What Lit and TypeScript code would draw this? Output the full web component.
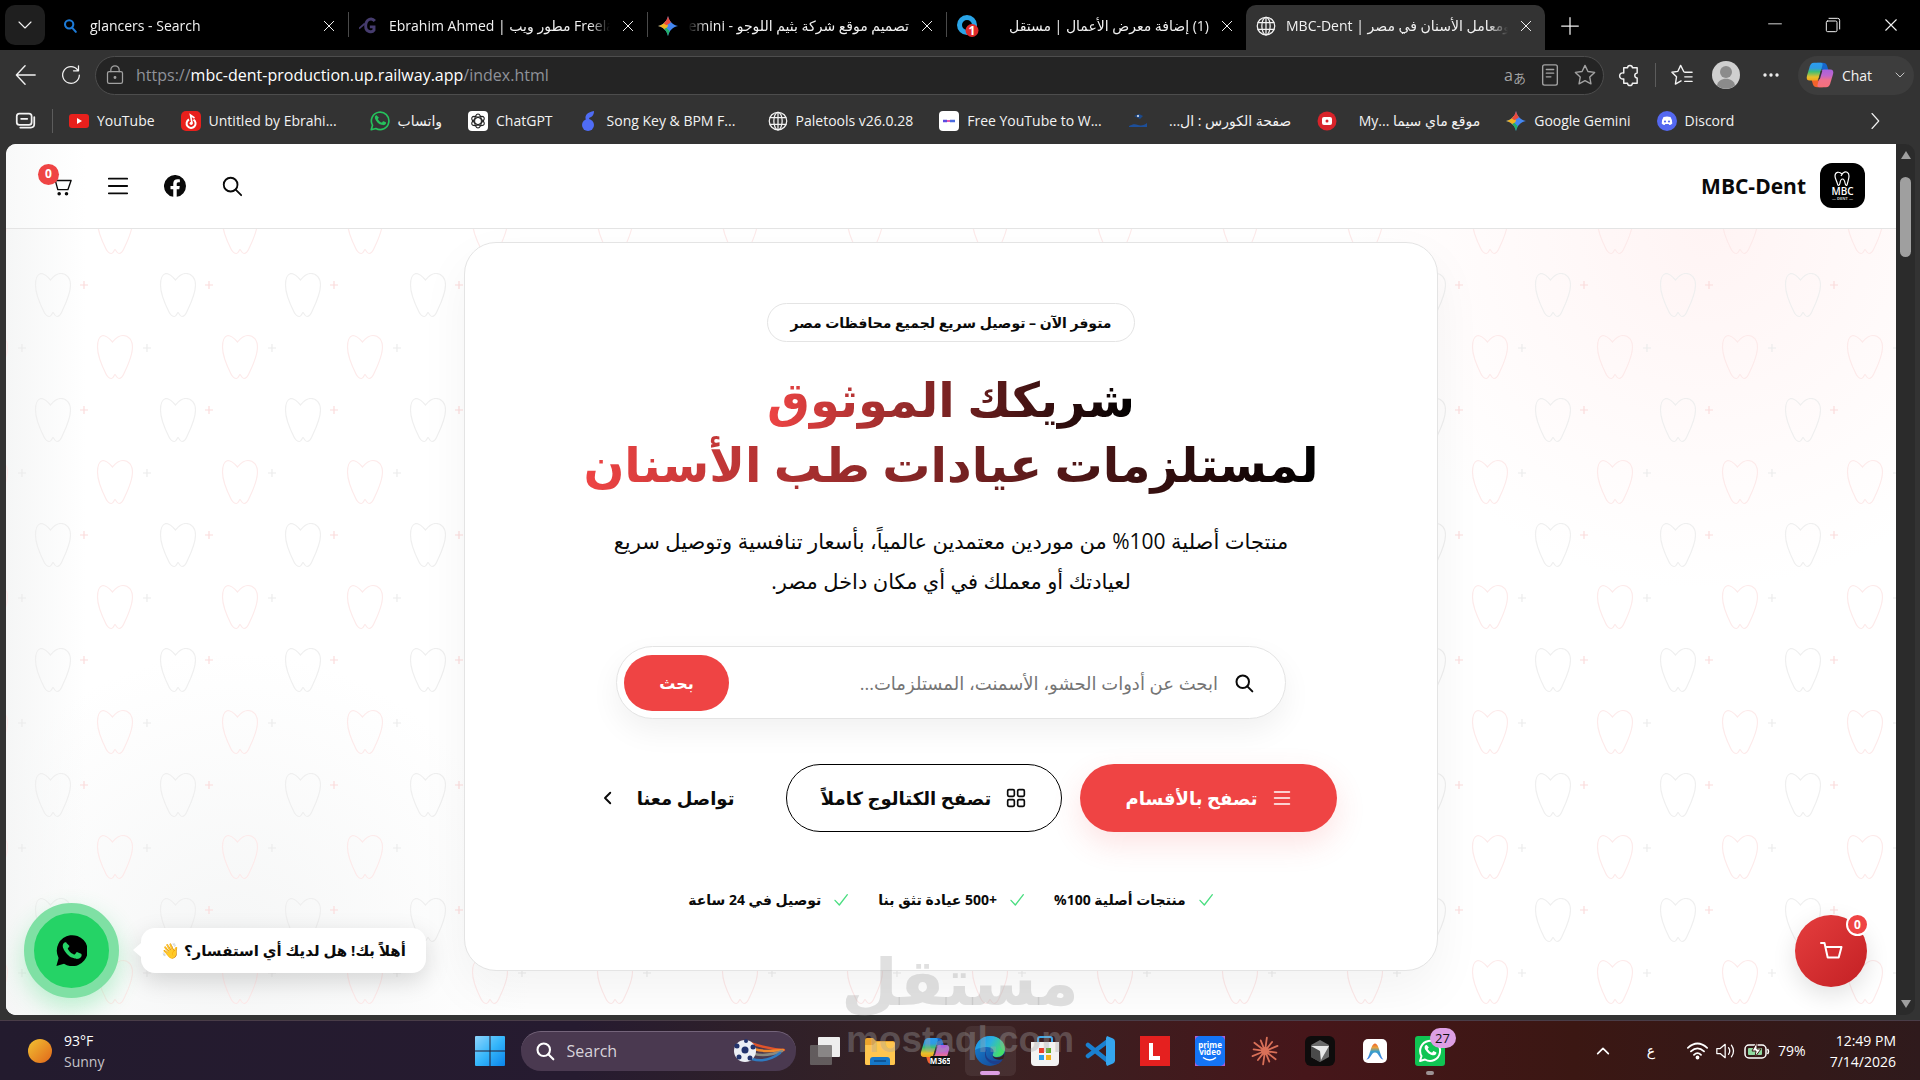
import { LitElement, html, svg, css, nothing } from "lit";
import { customElement } from "lit/decorators.js";
import { classMap } from "lit/directives/class-map.js";

const icon = (size: number, body: unknown, box = 24) =>
  html`<svg width=${size} height=${size} viewBox="0 0 ${box} ${box}" fill="none" stroke="currentColor"
    stroke-width="1.5" stroke-linecap="round" stroke-linejoin="round" aria-hidden="true">${body}</svg>`;

const shapes = {
  close: svg`<path d="M5 5l14 14M19 5L5 19"/>`,
  down: svg`<path d="M4 8l8 8 8-8"/>`,
  up: svg`<path d="M4 16l8-8 8 8"/>`,
  left: svg`<path d="M15 5l-7 7 7 7"/>`,
  plus: svg`<path d="M12 2v20M2 12h20"/>`,
  globe: svg`<circle cx="12" cy="12" r="10.5"/><ellipse cx="12" cy="12" rx="5" ry="10.5"/><path d="M2.5 8h19M2.5 16h19M12 1.5v21"/>`,
  search: svg`<circle cx="10.5" cy="10.5" r="7.5"/><path d="M16 16l6 6"/>`,
  menu: svg`<path d="M2 4h20M2 12h20M2 20h20"/>`,
  cart: svg`<path d="M1 3h4l3.500 13h11L23 6H6"/><circle cx="10" cy="20.5" r="1.2" fill="currentColor"/><circle cx="18" cy="20.5" r="1.2" fill="currentColor"/>`,
  basket: svg`<path d="M2 4h3.500l3.200 14.500h11L22.500 8H6.500"/>`,
  grid: svg`<rect x="2" y="2" width="8" height="8" rx="1.5"/><rect x="14" y="2" width="8" height="8" rx="1.5"/><rect x="2" y="14" width="8" height="8" rx="1.5"/><rect x="14" y="14" width="8" height="8" rx="1.5"/>`,
  check: svg`<path d="M3 12.500l6.500 7L21.500 4"/>`,
  facebook: svg`<path stroke="none" fill="currentColor" d="M24 12a12 12 0 1 0-13.900 11.850V15.470H7.080V12h3.020V9.360c0-3 1.800-4.670 4.550-4.670 1.300 0 2.680.23 2.680.23v2.950h-1.510c-1.490 0-1.950.930-1.950 1.880V12h3.320l-.530 3.470h-2.790v8.380A12 12 0 0 0 24 12z"/>`,
  gemini: svg`<defs><clipPath id="spark"><path d="M12 0c1.500 6.500 5.500 10.500 12 12-6.500 1.500-10.500 5.500-12 12-1.500-6.500-5.500-10.500-12-12C6.500 10.500 10.500 6.500 12 0z"/></clipPath></defs>
    <g clip-path="url(#spark)" stroke="none"><rect width="24" height="24" fill="#4487f2"/><path d="M0 4h9l3 8-3 4-9 3z" fill="#f3b41d"/><path d="M6 0h12l-3 8-5 3-4-3z" fill="#ea4a3c"/><path d="M7 24h9l-2-6-4-4-3 2z" fill="#22b067"/></g>`,
  phone: svg`<path stroke="none" fill="currentColor" d="M8.300 6.400c-.300-.700-.600-.700-.900-.700-1 0-2.200 1-2.200 2.900 0 1.700 1.300 3.400 1.500 3.700.2.200 2.500 4 6.200 5.400 3.100 1.200 3.700.8 4.300.7.700-.1 2.100-.9 2.400-1.700.3-.9.300-1.600.2-1.700-.2-.3-.5-.4-.9-.6l-2.300-1.100c-.3-.1-.6-.2-.8.2l-1.100 1.400c-.2.200-.4.300-.8.100-.3-.2-1.500-.5-2.800-1.700-1-.9-1.700-2.100-1.900-2.400-.2-.4 0-.6.200-.8l.9-1.200c.1-.3 0-.500 0-.600z"/>`,
};

const whatsappOutline = (color: string, size = 20) =>
  html`<svg width=${size} height=${size} viewBox="0 0 24 24" aria-hidden="true">
    <path d="M1.500 22.500L3 17A10.500 10.500 0 1 1 7 21z" fill="none" stroke=${color} stroke-width="2" stroke-linejoin="round"/>
    <g color=${color} transform="translate(1 0) scale(.92)">${shapes.phone}</g></svg>`;

const copilotArt = svg`
  <defs>
    <linearGradient id="cp1" x1="0" y1="0" x2="0" y2="1"><stop stop-color="#2b9df0"/><stop offset=".3" stop-color="#2f9be0"/><stop offset=".5" stop-color="#3fbf74"/><stop offset=".8" stop-color="#e8bf2c"/><stop offset="1" stop-color="#f2a51c"/></linearGradient>
    <linearGradient id="cp2" x1="0" y1="0" x2="0" y2="1"><stop stop-color="#a862dc"/><stop offset=".35" stop-color="#c066cc"/><stop offset=".6" stop-color="#f0708a"/><stop offset="1" stop-color="#f6707a"/></linearGradient>
  </defs>
  <path fill="#1666cc" d="M12 2h6c2.500 0 4 1 4.600 3.200L24 10h-6l-5-4z"/>
  <path fill="#f2622c" d="M18 28h-6c-2.500 0-4-1-4.600-3.200L6 20h6l5 4z"/>
  <path fill="url(#cp1)" d="M8.500 2H16c1.500 0 2 1 1.700 2.300L14 18c-.6 2-1.500 3-3.200 3H4c-2.800 0-3.800-2-3-5l3-10c.8-2.600 2-4 4.500-4z"/>
  <path fill="url(#cp2)" d="M21.500 28H14c-1.500 0-2-1-1.700-2.300L16 12c.6-2 1.500-3 3.200-3H26c2.800 0 3.800 2 3 5l-3 10c-.8 2.600-2 4-4.500 4z"/>
  <path fill="#333" d="M15.800 10.500h1.700l-2.700 9h-1.600z"/>`;

interface Tab {
  title: string;
  rtl?: boolean;
  active?: boolean;
  art: unknown;
}

const tabs: Tab[] = [
  {
    title: "glancers - Search",
    art: html`<svg width="20" height="20" viewBox="0 0 24 24" fill="none" stroke="#1d7bd8" stroke-width="2.5" stroke-linecap="round"><circle cx="11" cy="10" r="5"/><path d="M14.500 14l4.500 5"/></svg>`,
  },
  {
    title: "Ebrahim Ahmed | مطور ويب Freelancer",
    art: html`<svg width="20" height="20" viewBox="0 0 24 24" fill="none" stroke="#463c6e" stroke-width="3.5"><path d="M19 6c-4-5-11-2-11 6s8 8 10 5v-4h-5"/><path d="M0 15l7-6" stroke-width="2"/></svg>`,
  },
  { title: "تصميم موقع شركة بثيم اللوجو - Gemini", rtl: true, art: icon(20, shapes.gemini) },
  {
    title: "(1) إضافة معرض الأعمال | مستقل",
    rtl: true,
    art: html`<svg width="22" height="24" viewBox="0 0 22 24"><circle cx="10" cy="11" r="7.5" fill="#000" stroke="#2aa5e8" stroke-width="5"/><circle cx="15" cy="16.5" r="6.5" fill="#e02b2b"/><text x="15" y="21" text-anchor="middle" font-family="Open Sans" font-size="12" font-weight="700" fill="#fff">1</text></svg>`,
  },
  { title: "MBC-Dent | مستلزمات عيادات ومعامل الأسنان في مصر", active: true, art: icon(20, shapes.globe) },
];

interface Bookmark {
  label: string;
  rtl?: boolean;
  cut?: boolean;
  end?: boolean;
  art: unknown;
}

const bookmarks: Bookmark[] = [
  { label: "YouTube", art: html`<svg width="20" height="20" viewBox="0 0 20 20"><rect y="3" width="20" height="14" rx="3" fill="#e8201c"/><path d="M8 7l5 3-5 3z" fill="#fff"/></svg>` },
  { label: "Untitled by Ebrahi...", cut: true, art: html`<svg width="20" height="20" viewBox="0 0 20 20"><rect width="20" height="20" rx="5" fill="#e8201c"/><path d="M8 8.500a4.500 4.500 0 1 0 4.500.2" fill="none" stroke="#fff" stroke-width="2"/><circle cx="10.2" cy="12.3" r="1.6" fill="#fff"/><path d="M11 12L9.500 4l4 3" stroke="#fff" stroke-width="1.600" fill="none"/></svg>` },
  { label: "واتساب", rtl: true, art: whatsappOutline("#25c15c") },
  { label: "ChatGPT", art: html`<svg width="20" height="20" viewBox="0 0 20 20"><rect width="20" height="20" rx="4" fill="#fff"/><g fill="none" stroke="#222" stroke-width="1.1"><ellipse cx="10" cy="10" rx="3.4" ry="7"/><ellipse cx="10" cy="10" rx="3.4" ry="7" transform="rotate(60 10 10)"/><ellipse cx="10" cy="10" rx="3.4" ry="7" transform="rotate(120 10 10)"/></g></svg>` },
  { label: "Song Key & BPM F...", cut: true, art: html`<svg width="20" height="20" viewBox="0 0 20 20" fill="#4f6cf5"><circle cx="9" cy="14" r="6"/><path d="M7 9c-2-5 2-8 8-9 0 4-2 6-5 7l1 3z"/></svg>` },
  { label: "Paletools v26.0.28", art: icon(20, shapes.globe) },
  { label: "Free YouTube to W...", cut: true, art: html`<svg width="20" height="20" viewBox="0 0 20 20"><rect width="20" height="20" rx="4" fill="#fff"/><path d="M4 10h4" stroke="#5b4be0" stroke-width="2.5"/><path d="M8 10h4" stroke="#e05bb0" stroke-width="2"/><path d="M11 10h5" stroke="#4b6be0" stroke-width="2.5"/></svg>` },
  { label: "صفحة الكورس : ال...", rtl: true, cut: true, art: html`<svg width="20" height="20" viewBox="0 0 20 20"><path d="M6 5l5-2 4 2-3 3" fill="#1c4a8c"/><path d="M1 15c4-2 6-2 9-1s7 0 9-2v4H1z" fill="#1d4f9a"/><circle cx="10" cy="5" r="1" fill="#eee"/></svg>` },
  { label: "My... موقع ماي سيما", cut: true, end: true, art: html`<svg width="20" height="20" viewBox="0 0 20 20"><circle cx="10" cy="10" r="9.5" fill="#d8232a"/><rect x="5" y="6" width="10" height="8" rx="2" fill="#fff"/><circle cx="10" cy="10" r="1.5" fill="#d8232a"/></svg>` },
  { label: "Google Gemini", art: icon(20, shapes.gemini) },
  { label: "Discord", art: html`<svg width="20" height="20" viewBox="0 0 20 20"><circle cx="10" cy="10" r="10" fill="#5468f0"/><path fill="#fff" d="M6.500 6q3.500-1.200 7 0 2 3 1.800 6.500-1.500 1.500-3 1.500l-.6-1H8.300l-.6 1q-1.500 0-3-1.500Q4.500 9 6.500 6z"/><circle cx="8" cy="10.5" r="1.1" fill="#5468f0"/><circle cx="12" cy="10.5" r="1.1" fill="#5468f0"/></svg>` },
];

interface TaskApp {
  name: string;
  art: unknown;
  current?: boolean;
  badge?: string;
}

const rays = Array.from({ length: 12 }, (_, i) => ({ angle: i * 30 + 8, tip: i % 2 ? 3.5 : 1.5 }));

const taskApps: TaskApp[] = [
  { name: "Task view", art: svg`<rect x="8" y="1" width="22" height="20" rx="1" fill="#eee"/><rect x="0" y="9" width="22" height="20" rx="1" fill="#6f6b6b" fill-opacity=".8"/>` },
  { name: "File Explorer", art: svg`<path d="M0 4q0-2 2-2h6l3 3h17q2 0 2 2v20q0 2-2 2H2q-2 0-2-2z" fill="#eda52c"/><path d="M0 9h8l3-3h17q2 0 2 2v19q0 2-2 2H2q-2 0-2-2z" fill="#ffc64f"/><path d="M5 29v-5q0-3 3-3h14q3 0 3 3v5z" fill="#1577c8"/><path d="M9 25h12" stroke="#0e5596" stroke-width="2"/>` },
  { name: "Microsoft 365", art: svg`${copilotArt}<rect x="10" y="20" width="21" height="10" rx="2" fill="#111"/><text x="20.5" y="28" text-anchor="middle" font-family="Open Sans" font-size="8" font-weight="700" fill="#fff">M365</text>` },
  { name: "Microsoft Edge", current: true, art: svg`<defs><linearGradient id="ed1" x1="0" y1="0" x2="1" y2=".4"><stop stop-color="#1a8fe8"/><stop offset=".55" stop-color="#2cb0e0"/><stop offset="1" stop-color="#45df6a"/></linearGradient><linearGradient id="ed2" x1="0" y1="0" x2="1" y2="1"><stop stop-color="#1687d8"/><stop offset="1" stop-color="#163f8c"/></linearGradient></defs><circle cx="15" cy="15" r="15" fill="url(#ed2)"/><path d="M0 14C1 5 8 0 15 0c9 0 15 6 15 13 0 5-4 8-8 8-3 0-5-1-4-3 2-4-1-7-6-7-6 0-10 2-12 3z" fill="url(#ed1)"/><path d="M12 13c-3 5 0 12 8 12 4 0 7-1 8-2-1 2-3 4-5 5-6 1-13-3-13-9 0-3 1-5 2-6z" fill="#1d3f8c"/><path d="M18 18c-1 2 1 3.500 4 3.500 4 0 6-2 7.500-4.500 0 3-.5 4.500-1.500 6-5 2-12-.5-10-5z" fill="#33201f"/>` },
  { name: "Microsoft Store", art: svg`<path d="M8 6V3q0-2 2-2h10q2 0 2 2v3" fill="none" stroke="#3fa9ea" stroke-width="2"/><path d="M1 6h28v20q0 4-4 4H5q-4 0-4-4z" fill="#f3f3f3"/><path d="M9 12h5v5H9z" fill="#e8402a"/><path d="M16 12h5v5h-5z" fill="#5fae2a"/><path d="M9 19h5v5H9z" fill="#2a9fe8"/><path d="M16 19h5v5h-5z" fill="#f2b11c"/>` },
  { name: "Visual Studio Code", art: svg`<path d="M3 9l20 16M3 20L23 5" fill="none" stroke="#1a80d0" stroke-width="4.5" stroke-linecap="round"/><path d="M22 0l6 2.500q2 1 2 3v19q0 2-2 3L22 30l-1-2V2z" fill="#35a5ee"/>` },
  { name: "L", art: svg`<rect width="30" height="30" fill="#e5201f"/><path d="M11 7v15h9" fill="none" stroke="#fff" stroke-width="4"/>` },
  { name: "Prime Video", art: svg`<rect width="30" height="30" fill="#b45bd0"/><rect width="30" height="30" rx="5" fill="#1474f5"/><text x="15" y="12" text-anchor="middle" font-family="Open Sans" font-size="8" font-weight="700" fill="#fff">prime</text><text x="15" y="19" text-anchor="middle" font-family="Open Sans" font-size="8" font-weight="700" fill="#fff">video</text><path d="M8 21.500q7 5 13 0" fill="none" stroke="#fff" stroke-width="1.500"/>` },
  { name: "Claude", art: svg`<g stroke="#d97058" stroke-width="1.8" stroke-linecap="round">${rays.map((r) => svg`<path d="M15 13V${r.tip}" transform="rotate(${r.angle} 15 15)"/>`)}</g><circle cx="15" cy="15" r="4" fill="#d97058"/>` },
  { name: "Cursor", art: svg`<rect width="30" height="30" rx="6" fill="#0e0c0c"/><path d="M15 4l9 5v12l-9 5-9-5V9z" fill="#6a6a6a"/><path d="M6 9l9 5.500V26l-9-5z" fill="#4a4a4a"/><path d="M6 10h18l-8 14-1-9z" fill="#e8e8e8"/>` },
  { name: "Antigravity", art: svg`<defs><linearGradient id="arc" x1="0" y1="0" x2="0" y2="1"><stop stop-color="#f0622a"/><stop offset=".25" stop-color="#e8a03c"/><stop offset=".5" stop-color="#3aa0c8"/><stop offset="1" stop-color="#3a78ea"/></linearGradient></defs><rect x="3" y="3" width="24" height="24" rx="5" fill="#fff"/><path d="M6 23.500c4-1 4.500-16 9-16s5 15 9 16c-5 0-5-7-9-7s-4 7-9 7z" fill="url(#arc)"/>` },
  { name: "WhatsApp", badge: "27", art: svg`<rect width="30" height="30" rx="3" fill="#10c453"/><path d="M5 25l1.500-5A10 10 0 1 1 10 23.500z" fill="none" stroke="#fff" stroke-width="2" stroke-linejoin="round"/><g color="#fff" transform="translate(5.5 4.5) scale(.8)">${shapes.phone}</g>` },
];

const base = css`
  * { box-sizing: border-box; margin: 0; }
  button, input { font: inherit; color: inherit; border: 0; background: none; padding: 0; outline: 0; }
  button { display: inline-flex; align-items: center; justify-content: center; cursor: pointer; }
  a { color: inherit; text-decoration: none; }
  svg { display: block; flex: none; }
`;

@customElement("browser-chrome")
class BrowserChrome extends LitElement {
  static styles = [base, css`
    :host { display: block; background: #333; color: #f2f2f2; font-size: 14px; }
    .strip { display: flex; align-items: flex-end; height: 50px; background: #000; }
    .picker { width: 40px; height: 40px; margin: 5px; border-radius: 10px; background: #1f1f1f; }
    .tab { position: relative; display: flex; align-items: center; gap: 10px; flex: 0 1 299px; min-width: 0; height: 45px; padding: 0 11px 4px 10px; }
    .tab.line { border-image: linear-gradient(#000 8px, #4a4a4a 8px, #4a4a4a 32px, #000 32px) 1; border-right: 1px solid; }
    .tab.active { background: #333; border-radius: 10px 10px 0 0; }
    .tab-title { flex: 1; overflow: hidden; white-space: nowrap; line-height: 24px; mask-image: linear-gradient(to right, #000 calc(100% - 20px), transparent); }
    .tab-title.rtl { direction: rtl; mask-image: linear-gradient(to left, #000 calc(100% - 20px), transparent); }
    .add { width: 50px; height: 45px; padding-bottom: 4px; }
    .window { display: flex; margin-left: auto; }
    .window button { width: 58px; height: 45px; padding-bottom: 6px; }
    .toolbar { display: flex; align-items: center; height: 50px; padding: 0 6px 0 3px; }
    .tool { width: 45px; height: 40px; }
    .address { flex: 1; display: flex; align-items: center; gap: 11px; height: 39px; margin: 0 3px 0 2px; padding: 0 6px 0 9px; border: 1px solid #4d4d4d; border-radius: 20px; background: #242424; color: #a2a2a2; }
    .url { flex: 1; display: flex; align-items: center; min-width: 0; font-size: 16px; line-height: 24px; color: #8f9299; }
    .host { color: #fff; }
    .address button { width: 24px; height: 30px; }
    .translate { font-size: 16px; font-family: "Open Sans", "Noto Sans CJK JP", sans-serif; }
    .translate small { font-size: 13px; padding-top: 5px; }
    .rule { width: 1px; height: 24px; background: #5c5c5c; }
    .toolbar .rule { margin: 0 3px; }
    .avatar { margin: 0 8px; }
    .chat { width: 116px; height: 39px; margin-left: 5px; gap: 8px; border-radius: 20px; background: #3d3d3d; }
    .chat svg:last-child { margin-left: 14px; }
    .bookmarks { display: flex; align-items: center; gap: 26px; height: 41px; padding: 0 36px 0 15px; }
    .bookmark { display: flex; align-items: center; gap: 8px; white-space: nowrap; line-height: 24px; }
    .cut { width: 135px; }
    .end { text-align: right; }
    .bookmarks .rule { margin: 0 -10px; }
    .more { margin-left: auto; }
  `];

  render() {
    return html`
      <div class="strip">
        <button class="picker" aria-label="Tab actions">${icon(18, shapes.down)}</button>
        ${tabs.map((t, i) => html`
          <div class=${classMap({ tab: true, active: !!t.active, line: i < 3 })}>
            ${t.art}
            <span class=${classMap({ "tab-title": true, rtl: !!t.rtl })}>${t.title}</span>
            <button aria-label="Close tab">${icon(16, shapes.close)}</button>
          </div>`)}
        <button class="add" aria-label="New tab">${icon(20, shapes.plus)}</button>
        <div class="window">
          <button aria-label="Minimize">${icon(14, svg`<path d="M1 10h22"/>`)}</button>
          <button aria-label="Restore">${icon(16, svg`<rect x="2" y="6" width="16" height="16" rx="2"/><path d="M6 2h13q3 0 3 3v13"/>`)}</button>
          <button aria-label="Close window">${icon(18, shapes.close)}</button>
        </div>
      </div>
      <div class="toolbar">
        <button class="tool" aria-label="Back">${icon(22, svg`<path d="M22 12H2M11 2L1.500 12 11 22"/>`)}</button>
        <button class="tool" aria-label="Refresh">${icon(20, svg`<path d="M20 6A10 10 0 1 0 22 12M21 1v6h-6"/>`)}</button>
        <div class="address">
          ${icon(20, svg`<rect x="3" y="8" width="18" height="14" rx="2"/><path d="M7 8V6a5 5 0 0 1 10 0v2"/><circle cx="12" cy="15" r="1" fill="currentColor"/>`)}
          <div class="url"><span>https://</span><span class="host">mbc-dent-production.up.railway.app</span><span>/index.html</span></div>
          <button class="translate" aria-label="Translate">a<small>あ</small></button>
          <button aria-label="Reader">${icon(22, svg`<rect x="4" y="1" width="16" height="22" rx="2"/><path d="M8 6h8M8 10h8M8 14h5"/>`)}</button>
          <button aria-label="Add to favorites">${icon(22, svg`<path d="M12 1.500l3.200 6.700 7.300 1-5.300 5.100 1.300 7.300L12 18.100l-6.500 3.500 1.300-7.300L1.500 9.200l7.300-1z"/>`)}</button>
        </div>
        <button class="tool" aria-label="Extensions">${icon(23, svg`<path d="M6 4h4a2.500 2.500 0 0 1 5 0h5v5.500a2.500 2.500 0 0 0 0 5V20h-5a2.500 2.500 0 0 1-5 0H6v-4.500a3.200 3.200 0 1 1 0-6z"/>`)}</button>
        <span class="rule"></span>
        <button class="tool" aria-label="Favorites">${icon(22, svg`<path d="M14 8.500L10.500 1.500 7.500 8 1 9l5 5-1.200 8L11 18.500M15 9h8M15 14h8M15 19h8"/>`)}</button>
        <button class="avatar" aria-label="Profile"><svg width="28" height="28" viewBox="0 0 28 28"><circle cx="14" cy="14" r="14" fill="#cfcfcf"/><circle cx="14" cy="11" r="6" fill="#8b8b8b"/><path d="M5 24.500c1-9 17-9 18 0a14 14 0 0 1-18 0z" fill="#8b8b8b"/></svg></button>
        <button class="tool" aria-label="Settings">${icon(18, svg`<g fill="currentColor"><circle cx="4" cy="12" r="1.5"/><circle cx="12" cy="12" r="1.5"/><circle cx="20" cy="12" r="1.5"/></g>`)}</button>
        <button class="chat"><svg width="28" height="28" viewBox="0 0 30 30" aria-hidden="true">${copilotArt}</svg>Chat${icon(12, shapes.down)}</button>
      </div>
      <nav class="bookmarks">
        <button aria-label="Workspaces">${icon(21, svg`<rect x="2" y="4" width="17" height="13" rx="3" stroke-width="2"/><path d="M7 10h7M22 8v8q0 4-4 4H6" stroke-width="2"/>`)}</button>
        <span class="rule"></span>
        ${bookmarks.map((b) => html`<a class="bookmark" href="#">${b.art}<span class=${classMap({ cut: !!b.cut, end: !!b.end })} dir=${b.rtl ? "rtl" : "ltr"}>${b.label}</span></a>`)}
        <button class="more" aria-label="More bookmarks">${icon(18, svg`<path d="M8 2l9 10-9 10"/>`)}</button>
      </nav>`;
  }
}

@customElement("store-page")
class StorePage extends LitElement {
  static styles = [base, css`
    :host { display: flex; min-height: 0; margin: 3px 5px 5px 6px; border-radius: 10px; overflow: hidden; background: #2b2b2b; color: #0a0a0a; }
    .page { position: relative; flex: 1; display: flex; flex-direction: column; overflow: hidden; background: #fff; direction: rtl; }
    header { position: relative; z-index: 1; display: flex; align-items: center; justify-content: space-between; flex: none; height: 85px; padding: 0 31px 1px 43px; border-bottom: 1px solid #e4e4e4; background: linear-gradient(to right, #f8f9f9, #fff 80px); }
    .brand { display: flex; align-items: center; gap: 14px; font: 700 21px/30px "Open Sans", sans-serif; direction: ltr; }
    .logo { border-radius: 12px; }
    .actions { display: flex; gap: 33px; direction: ltr; }
    .actions button, .actions a { position: relative; display: flex; align-items: center; justify-content: center; width: 24px; height: 24px; }
    .count { position: absolute; display: flex; align-items: center; justify-content: center; width: 21px; height: 21px; border-radius: 50%; background: #ef4444; color: #fff; font: 700 12px/20px "Open Sans", sans-serif; }
    .actions .count { top: -10px; left: -11px; }
    main { position: relative; flex: 1; display: flex; justify-content: center; align-items: flex-start; min-height: 0; padding-top: 13px;
      background: linear-gradient(to right, #f5f6f6, transparent 80px), radial-gradient(circle at 90% 0, #fff4f4, transparent 360px), radial-gradient(circle at 12% 92%, #f5f6f6, transparent 300px), #fff; }
    .pattern { position: absolute; inset: 0; width: 100%; height: 100%; }
    .hero { position: relative; display: flex; flex-direction: column; align-items: center; width: 974px; max-width: 90%; padding: 60px 80px; border: 1px solid #e4e4e4; border-radius: 32px; background: #fff; box-shadow: 0 20px 50px rgba(0, 0, 0, .05); text-align: center; }
    .tag { padding: 0 22px; border: 1px solid #e4e4e4; border-radius: 20px; font-size: 14px; font-weight: 700; line-height: 37px; }
    h1 { margin-top: 24px; font-size: 48px; font-weight: 700; line-height: 65px; white-space: nowrap; }
    h1 span { display: table; margin: 0 auto; background: linear-gradient(to left, #000, #ef4444); background-clip: text; color: transparent; }
    .lead { margin-top: 25px; font-size: 21px; line-height: 40px; }
    .search { display: flex; align-items: center; gap: 16px; width: 670px; max-width: 100%; height: 73px; margin-top: 45px; padding: 0 31px 0 7px; border: 1px solid #e4e4e4; border-radius: 37px; background: #fff; box-shadow: 0 12px 30px rgba(0, 0, 0, .06); }
    .search input { flex: 1; min-width: 0; height: 40px; font-size: 18px; }
    .search input::placeholder { color: #757575; opacity: 1; }
    .search button { width: 105px; height: 56px; border-radius: 28px; background: #ef4444; color: #fff; font-size: 16px; font-weight: 700; }
    .ctas { display: flex; align-items: center; gap: 18px; margin-top: 45px; font-size: 18px; font-weight: 700; white-space: nowrap; }
    .cta { display: flex; align-items: center; justify-content: center; gap: 15px; height: 68px; border-radius: 34px; }
    .primary { width: 257px; background: #ef4444; color: #fff; box-shadow: 0 12px 30px rgba(239, 68, 68, .15); }
    .outline { width: 276px; border: 1px solid #000; }
    .plain { width: 202px; gap: 20px; }
    .facts { display: flex; gap: 29px; margin-top: 58px; padding: 0; list-style: none; font-size: 14px; font-weight: 700; line-height: 20px; }
    .facts li { display: flex; align-items: center; gap: 12px; }
    .facts svg { color: #4ade80; }
    .help { position: absolute; left: 18px; bottom: 17px; display: flex; align-items: center; gap: 22px; direction: ltr; }
    .wa { width: 95px; height: 95px; border: 10px solid #7fe0a4; border-radius: 50%; background: #25d366; box-shadow: 0 10px 24px rgba(37, 211, 102, .3); color: #000; }
    .bubble { position: relative; height: 45px; padding: 0 20px; border-radius: 14px; background: #fff; box-shadow: 0 8px 24px rgba(0, 0, 0, .15); font-size: 15px; font-weight: 700; line-height: 45px; direction: rtl; white-space: nowrap; }
    .bubble::before { content: ""; position: absolute; left: -8px; top: 15px; border: solid transparent; border-width: 7px 8px 7px 0; border-right-color: #fff; }
    .fab { position: absolute; right: 29px; bottom: 28px; width: 72px; height: 72px; border-radius: 50%; background: linear-gradient(135deg, #e53e3e, #c32024); box-shadow: 0 8px 24px rgba(0, 0, 0, .12); color: #fff; }
    .fab .count { top: -2px; right: -2px; border: 2px solid #fff; width: 23px; height: 23px; }
    .scroll { display: flex; flex-direction: column; align-items: center; justify-content: space-between; flex: none; width: 19px; padding: 7px 0; color: #9f9f9f; }
    .thumb { flex: none; width: 11px; height: 80px; margin: 18px 0 auto; border-radius: 6px; background: #9f9f9f; }
  `];

  private tooth = "M15.500 7C12 3 9 .5 6 .5 2 1 .5 7 .5 12c0 10 5.500 21 8.500 27 2 4 4 4.500 5.500 4.500 2 0 2.500-3.500 3.500-4 1 .5 2 4 4 4s3.500-1.500 5-5c4-8.500 8.500-17.500 8.500-26.500C35.500 5 31.500.5 26 .5S18 4 15.500 7z";

  render() {
    return html`
      <div class="page">
        <header>
          <a class="brand" href="#">MBC-Dent
            <svg class="logo" width="45" height="45" viewBox="0 0 45 45"><rect width="45" height="45" fill="#000"/><path d="M22 11c-3-3-7-2-7 2 0 3 2 5 2.500 8 .3 2 2 2 2.500-1 .4-3 1-4 2.500-4s2 1 2.500 4c.5 3 2 3 2.300 1 .7-3 1.700-5 1.700-8 0-4-3-5-6-3l-2 3" fill="none" stroke="#fff" stroke-width="1.200"/><text x="22.5" y="32" text-anchor="middle" font-family="Open Sans" font-size="10" font-weight="600" fill="#fff">MBC</text><text x="22.5" y="37" text-anchor="middle" font-family="Open Sans" font-size="4" fill="#ccc">— DENT —</text></svg>
          </a>
          <div class="actions">
            <button aria-label="Cart">${icon(22, shapes.cart)}<span class="count">0</span></button>
            <button aria-label="Menu">${icon(22, svg`<g stroke-width="2">${shapes.menu}</g>`)}</button>
            <a href="#" aria-label="Facebook">${icon(22, shapes.facebook)}</a>
            <button aria-label="Search">${icon(22, svg`<g stroke-width="2">${shapes.search}</g>`)}</button>
          </div>
        </header>
        <main>
          <svg class="pattern" aria-hidden="true">
            <defs>
              <pattern id="teeth" width="125" height="125" patternUnits="userSpaceOnUse" y="-81">
                <g fill="none" stroke-width="1.2">
                  <path transform="translate(29)" d=${this.tooth} stroke="#efefef"/>
                  <path transform="translate(91 62)" d=${this.tooth} stroke="#fdeaea"/>
                  <path d="M74 12h8M78 8v8" stroke="#fbdcdc"/>
                  <path d="M12 75h8M16 71v8" stroke="#ececec"/>
                  <path transform="translate(-34 62)" d=${this.tooth} stroke="#fdeaea"/>
                </g>
              </pattern>
            </defs>
            <rect width="100%" height="100%" fill="url(#teeth)"/>
          </svg>
          <section class="hero">
            <p class="tag">متوفر الآن – توصيل سريع لجميع محافظات مصر</p>
            <h1><span>شريكك الموثوق</span><span>لمستلزمات عيادات طب الأسنان</span></h1>
            <p class="lead">منتجات أصلية 100% من موردين معتمدين عالمياً، بأسعار تنافسية وتوصيل سريع<br>لعيادتك أو معملك في أي مكان داخل مصر.</p>
            <form class="search">
              ${icon(20, svg`<g stroke-width="2.4">${shapes.search}</g>`)}
              <input type="search" aria-label="بحث" placeholder="ابحث عن أدوات الحشو، الأسمنت، المستلزمات...">
              <button type="button">بحث</button>
            </form>
            <div class="ctas">
              <a class="cta primary" href="#">${icon(18, svg`<g stroke-width="2">${shapes.menu}</g>`)}تصفح بالأقسام</a>
              <a class="cta outline" href="#">${icon(20, svg`<g stroke-width="2">${shapes.grid}</g>`)}تصفح الكتالوج كاملاً</a>
              <a class="cta plain" href="#">تواصل معنا${icon(18, svg`<g stroke-width="2.5">${shapes.left}</g>`)}</a>
            </div>
            <ul class="facts">
              ${["منتجات أصلية 100%", "+500 عيادة تثق بنا", "توصيل في 24 ساعة"].map((f) => html`<li>${icon(16, svg`<g stroke-width="2">${shapes.check}</g>`)}${f}</li>`)}
            </ul>
          </section>
        </main>
        <div class="help">
          <button class="wa" aria-label="WhatsApp"><svg width="31" height="31" viewBox="0 0 24 24"><path d="M.3 24l1.700-6.200A12 12 0 1 1 6.200 22.300z"/><g color="#25d366">${shapes.phone}</g></svg></button>
          <div class="bubble">أهلاً بك! هل لديك أي استفسار؟ 👋</div>
        </div>
        <button class="fab" aria-label="Cart">${icon(24, svg`<g stroke-width="2">${shapes.basket}</g>`)}<span class="count">0</span></button>
      </div>
      <div class="scroll">
        <svg width="10" height="8" viewBox="0 0 10 8" fill="currentColor"><path d="M5 0l5 8H0z"/></svg>
        <span class="thumb"></span>
        <svg width="10" height="8" viewBox="0 0 10 8" fill="currentColor"><path d="M0 0h10L5 8z"/></svg>
      </div>`;
  }
}

@customElement("task-bar")
class TaskBar extends LitElement {
  static styles = [base, css`
    :host { display: grid; grid-template-columns: 1fr auto 1fr; align-items: center; height: 59px; border-top: 1px solid #4a3d48; background: linear-gradient(to right, #231b2e, #261b30 30%, #2f2029 40%, #382223 50%, #46161a 68%, #3b1713 82%, #2f1a1c); color: #fff; font-size: 14px; line-height: 21px; }
    .weather { display: flex; align-items: center; gap: 12px; padding-left: 28px; }
    .weather small { display: block; font-size: 14px; color: #c6c3c9; }
    .apps { display: flex; align-items: center; }
    .start { width: 46px; height: 50px; margin-left: 4px; }
    .find { display: flex; align-items: center; gap: 12px; width: 275px; height: 40px; margin: 0 2px 0 8px; padding: 0 10px 0 14px; border-radius: 20px; border-top: 1px solid #74647a; background: #4a3950; }
    .find input { flex: 1; min-width: 0; font-size: 16px; }
    .find input::placeholder { color: #d8d3da; opacity: 1; }
    .app { position: relative; width: 51px; height: 50px; margin: 0 2px; border-radius: 6px; }
    .app.current { background: rgba(255, 255, 255, .07); }
    .app.current::after, .app.badged::after { content: ""; position: absolute; bottom: 1px; width: 20px; height: 4px; border-radius: 2px; background: #dd9fe4; }
    .app.badged::after { width: 8px; background: #9c9294; }
    .badge { position: absolute; top: 2px; right: 0; width: 26px; height: 20px; border-radius: 10px; background: #dd9fe4; color: #111; font-size: 13px; line-height: 20px; }
    .tray { display: flex; align-items: center; justify-content: flex-end; padding-right: 24px; }
    .tray button { height: 40px; }
    .lang { margin: 0 32px 0 36px; }
    .status { gap: 8px; }
    .clock { margin-left: 24px; text-align: right; }
  `];

  render() {
    return html`
      <div class="weather">
        <svg width="24" height="24" viewBox="0 0 24 24"><defs><linearGradient id="sun" x1="0" y1="0" x2="1" y2="1"><stop stop-color="#f2c232"/><stop offset="1" stop-color="#e0661a"/></linearGradient></defs><circle cx="12" cy="12" r="12" fill="url(#sun)"/></svg>
        <div>93°F<small>Sunny</small></div>
      </div>
      <div class="apps">
        <button class="start" aria-label="Start"><svg width="30" height="30" viewBox="0 0 30 30"><defs><linearGradient id="win" x1="0" y1="0" x2="1" y2="1"><stop stop-color="#8fd4fb"/><stop offset=".5" stop-color="#35b6fb"/><stop offset="1" stop-color="#0a84ea"/></linearGradient></defs><path d="M0 1q0-1 1-1h13.500v14.500H0zM15.500 0H29q1 0 1 1v13.500H15.500zM0 15.500h14.500V30H1q-1 0-1-1zM15.500 15.500H30V29q0 1-1 1H15.500z" fill="url(#win)"/></svg></button>
        <label class="find">
          ${icon(20, svg`<g stroke-width="2.5">${shapes.search}</g>`)}
          <input type="search" aria-label="Search" placeholder="Search">
          <svg width="52" height="26" viewBox="0 0 52 26"><g fill="none" stroke-width="2.5" stroke-linecap="round"><path d="M16 5c12 4 20 6 34 7" stroke="#e0532a"/><path d="M20 11c10 3 18 2 29 1" stroke="#f08a2c"/><path d="M20 16c10 2 18 1 28-3" stroke="#8a8a80"/><path d="M18 21c10 3 20 0 28-6" stroke="#2f7ac0"/></g><circle cx="11" cy="13" r="11" fill="#eceff5"/><g fill="#23346e"><circle cx="11" cy="12" r="3.5"/><circle cx="3" cy="8" r="2.5"/><circle cx="12" cy="3" r="2"/><circle cx="19" cy="9" r="2.5"/><circle cx="16" cy="20" r="2.5"/><circle cx="5" cy="19" r="2.5"/></g></svg>
        </label>
        ${taskApps.map((a) => html`
          <button class=${classMap({ app: true, current: !!a.current, badged: !!a.badge })} aria-label=${a.name}>
            <svg width="30" height="30" viewBox="0 0 30 30">${a.art}</svg>
            ${a.badge ? html`<span class="badge">${a.badge}</span>` : nothing}
          </button>`)}
      </div>
      <div class="tray">
        <button aria-label="Hidden icons">${icon(16, svg`<g stroke-width="2.5">${shapes.up}</g>`)}</button>
        <button class="lang">ع</button>
        <button class="status">
          ${icon(21, svg`<g stroke-width="2"><path d="M1 9q11-10 22 0M4.500 13q7.500-7 15 0M8 17q4-4 8 0"/><circle cx="12" cy="20" r="1.2" fill="currentColor"/></g>`)}
          ${icon(20, svg`<path d="M1 9h4l6-5v16l-6-5H1zM15 8q3 4 0 8M18.500 5q5 7 0 14"/>`)}
          <svg width="26" height="18" viewBox="0 0 26 18"><rect x="1" y="3" width="21" height="13" rx="4" fill="none" stroke="#fff" stroke-width="1.5"/><rect x="4" y="6" width="14" height="7" rx="1" fill="#8fd9a0"/><path d="M23.500 7q2 2.500 0 5" stroke="#fff" fill="none" stroke-width="1.5"/><path d="M13 0l-5 9h4l-1 6 6-8h-4z" fill="#fff" stroke="#3b1713"/></svg>
          79%
        </button>
        <div class="clock">12:49 PM<br>7/14/2026</div>
      </div>`;
  }
}

@customElement("app-root")
class AppRoot extends LitElement {
  static styles = css`
    :host { position: relative; display: flex; flex-direction: column; height: 100vh; overflow: hidden; background: #333; font-family: "Open Sans", "DejaVu Sans", sans-serif; }
    browser-chrome, task-bar { flex: none; }
    store-page { flex: 1; }
    .watermark { position: absolute; left: 50%; bottom: 20px; transform: translateX(-50%); text-align: center; color: rgba(165, 165, 165, .35); font-weight: 700; pointer-events: none; }
    .mark { font-size: 65px; line-height: 80px; }
    .domain { font: 700 37px/40px "Liberation Sans", sans-serif; }
  `;

  render() {
    return html`
      <browser-chrome></browser-chrome>
      <store-page></store-page>
      <task-bar></task-bar>
      <div class="watermark"><div class="mark" dir="rtl">مستقل</div><div class="domain">mostaql.com</div></div>`;
  }
}
